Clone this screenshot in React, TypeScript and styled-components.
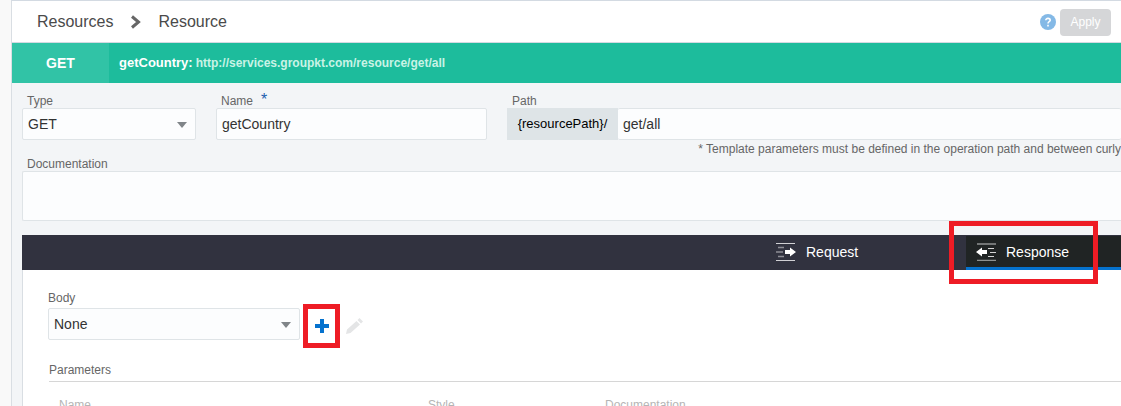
import React from "react";
import styled, { createGlobalStyle } from "styled-components";

const GlobalStyle = createGlobalStyle`
  *, *::before, *::after { box-sizing: border-box; }
  body {
    margin: 0;
    background: #f9f9f9;
    color: #333;
    font: 12px/16px "Liberation Sans", Arial, sans-serif;
  }
`;

const Page = styled.main`
  min-height: 100vh;
  margin-left: 11px;
  border-left: 1px solid #d9dee3;
  border-top: 1px solid #d3dae2;
  background: #f3f5f7;
  overflow-x: clip;
`;

const Header = styled.header`
  display: flex;
  align-items: center;
  height: 42px;
  padding: 1px 10px 0 25px;
  border-bottom: 1px solid #d3dae2;
  background: #fff;
`;

const Breadcrumb = styled.nav`
  display: flex;
  align-items: center;
  gap: 17px;
  flex: 1;
  font-size: 16px;
  line-height: 20px;
`;

const Crumb = styled.a`
  color: #4a4a4a;
  text-decoration: none;
`;

const IconButton = styled.button`
  display: flex;
  padding: 0;
  border: 0;
  background: none;
`;

const ApplyButton = styled.button`
  width: 51px;
  height: 27px;
  margin-left: 4px;
  padding: 0;
  border: 0;
  border-radius: 4px;
  background: #d5d6d8;
  color: #fff;
  font: 12px/16px "Liberation Sans", Arial, sans-serif;
`;

const MethodBar = styled.div`
  display: flex;
  align-items: center;
  height: 40px;
  background: #1dbc9c;
  color: #fff;
  font-size: 13px;
  font-weight: bold;
`;

const Method = styled.span`
  display: flex;
  align-items: center;
  justify-content: center;
  width: 97px;
  height: 40px;
  margin-right: 10px;
  background: #31c3a6;
  font-size: 14px;
`;

const Url = styled.span`
  margin-left: 3px;
  color: #c9f3e6;
  font-size: 12px;
`;

const Form = styled.form`
  padding: 11px 0 0 10px;
`;

const FieldRow = styled.div`
  display: grid;
  grid-template-columns: 174px 271px 1fr;
  gap: 20px;
`;

const Field = styled.div`
  min-width: 0;
`;

const Label = styled.label<{ $spaced?: boolean }>`
  display: block;
  padding: ${(p) => (p.$spaced ? "0 0 3px" : "0 0 0 5px")};
  color: #666;
  font-size: 12px;
  line-height: 14px;
`;

const Required = styled.span`
  margin-left: 8px;
  color: #1f5fae;
  font-size: 16px;
  line-height: 0;
`;

const SelectWrap = styled.div<{ $width: number }>`
  position: relative;
  width: ${(p) => p.$width}px;

  svg {
    position: absolute;
    top: 14px;
    right: 9px;
    pointer-events: none;
  }
`;

const Select = styled.select`
  display: block;
  appearance: none;
  width: 100%;
  height: 32px;
  padding: 0 24px 0 5px;
  border: 1px solid #dfe4e7;
  border-radius: 2px;
  background: #fcfdfe;
  color: #333;
  font: 14px/20px "Liberation Sans", Arial, sans-serif;
`;

const TextInput = styled.input`
  display: block;
  flex: 1;
  width: 100%;
  min-width: 0;
  height: 32px;
  padding: 0 5px;
  border: 1px solid #dfe4e7;
  border-radius: 2px;
  background: #fcfdfe;
  color: #333;
  font: 14px/20px "Liberation Sans", Arial, sans-serif;
`;

const PathGroup = styled.div`
  display: flex;

  ${TextInput} {
    border-left: 0;
    border-right: 0;
  }
`;

const PathPrefix = styled.span`
  display: flex;
  align-items: center;
  justify-content: center;
  width: 111px;
  height: 32px;
  background: #dee4e7;
  color: #000;
  font-size: 13px;
`;

const Hint = styled.p`
  margin: 0;
  padding-top: 1px;
  color: #666;
  text-align: right;
  white-space: nowrap;
`;

const TextArea = styled.textarea`
  display: block;
  width: 100%;
  height: 50px;
  border: 1px solid #dfe4e7;
  border-right: 0;
  border-radius: 2px 0 0 2px;
  background: #fcfdfe;
  resize: none;
`;

const TabBar = styled.div`
  display: flex;
  justify-content: flex-end;
  height: 35px;
  margin: 14px -45px 0 10px;
  background: #31323f;
`;

const Tab = styled.button<{ $active?: boolean }>`
  position: relative;
  display: flex;
  align-items: center;
  gap: 10px;
  width: 200px;
  padding: 0 10px;
  border: 0;
  border-top: 1px solid #31323f;
  border-bottom: 3px solid ${(p) => (p.$active ? "#0572ce" : "#31323f")};
  background: ${(p) => (p.$active ? "#202424" : "#31323f")};
  color: #fff;
  font: 14px/20px "Liberation Sans", Arial, sans-serif;
`;

const Highlight = styled.span<{ $x: number; $y: number; $w: number; $h: number }>`
  position: absolute;
  left: ${(p) => p.$x}px;
  top: ${(p) => p.$y}px;
  width: ${(p) => p.$w}px;
  height: ${(p) => p.$h}px;
  border: 5px solid #ee1c25;
  pointer-events: none;
`;

const Panel = styled.section`
  margin-left: 10px;
  padding: 21px 0 0 25px;
  border-left: 1px solid #d9dee3;
  background: #fff;
`;

const BodyRow = styled.div`
  display: flex;
  align-items: center;

  button {
    margin-top: 4px;
  }
`;

const AddButton = styled(IconButton)`
  position: relative;
  margin: 0 16px 0 15px;
`;

const SectionTitle = styled.h2`
  margin: 22px 0 0 1px;
  padding-bottom: 3px;
  border-bottom: 1px solid #d6d6d6;
  color: #666;
  font-size: 12px;
  font-weight: normal;
  line-height: 16px;
`;

const Table = styled.table`
  width: 100%;
  margin-top: 15px;
  border-collapse: collapse;
  table-layout: fixed;
`;

const Column = styled.th<{ $width?: number }>`
  width: ${(p) => (p.$width ? `${p.$width}px` : "auto")};
  padding: 0 0 0 11px;
  color: #b5b5b5;
  font-weight: normal;
  text-align: left;
`;

const Arrow = () => (
  <svg width="10" height="6" viewBox="0 0 10 6" aria-hidden="true">
    <path d="M0 0h10L5 6z" fill="#808589" />
  </svg>
);

const RequestIcon = () => (
  <svg width="20" height="18" viewBox="0 0 20 18" aria-hidden="true">
    <path d="M0 .5h19M0 17.5h19" stroke="#d0d0d4" />
    <path d="M2 4.500h6M0 9h7M2 13.500h6" stroke="#8e8e96" strokeWidth="1.500" />
    <path d="M9 7h5V4.500l6 4.500-6 4.500V11H9z" fill="#fff" />
  </svg>
);

const ResponseIcon = () => (
  <svg width="20" height="18" viewBox="0 0 20 18" aria-hidden="true">
    <path d="M1 1h19M1 17.500h19" stroke="#8e9191" strokeWidth="1.500" />
    <path d="M12 5.500h6M14 9.500h6M12 13.500h6" stroke="#d5d5d5" />
    <path d="M11 7H6V4.500L0 9l6 4.500V11h5z" fill="#fff" />
  </svg>
);

export default function App() {
  return (
    <>
      <GlobalStyle />
      <Page>
        <Header>
          <Breadcrumb aria-label="Breadcrumb">
            <Crumb href="#resources">Resources</Crumb>
            <svg width="11" height="14" viewBox="0 0 11 14" aria-hidden="true">
              <path d="M2 1.500L8.500 7L2 12.500" fill="none" stroke="#666" strokeWidth="3" />
            </svg>
            <Crumb href="#resource">Resource</Crumb>
          </Breadcrumb>
          <IconButton type="button" aria-label="Help">
            <svg width="16" height="16" viewBox="0 0 16 16">
              <circle cx="8" cy="8" r="8" fill="#84b9e6" />
              <path d="M5.800 6.200C5.800 3.700 10.200 3.800 10.200 6.200C10.200 7.700 8 7.600 8 9.400M8 10.800v1.700" fill="none" stroke="#fff" strokeWidth="1.600" />
            </svg>
          </IconButton>
          <ApplyButton type="button">Apply</ApplyButton>
        </Header>
        <MethodBar>
          <Method>GET</Method>
          getCountry:<Url>http://services.groupkt.com/resource/get/all</Url>
        </MethodBar>
        <Form>
          <FieldRow>
            <Field>
              <Label htmlFor="type">Type</Label>
              <SelectWrap $width={174}>
                <Select id="type" defaultValue="GET">
                  <option>GET</option>
                </Select>
                <Arrow />
              </SelectWrap>
            </Field>
            <Field>
              <Label htmlFor="name">
                Name<Required>*</Required>
              </Label>
              <TextInput id="name" defaultValue="getCountry" />
            </Field>
            <Field>
              <Label htmlFor="path">Path</Label>
              <PathGroup>
                <PathPrefix>{"{resourcePath}/"}</PathPrefix>
                <TextInput id="path" defaultValue="get/all" />
              </PathGroup>
              <Hint>* Template parameters must be defined in the operation path and between curly</Hint>
            </Field>
          </FieldRow>
          <Label htmlFor="documentation">Documentation</Label>
          <TextArea id="documentation" />
        </Form>
        <TabBar role="tablist">
          <Tab type="button" role="tab" aria-selected="false">
            <RequestIcon />
            Request
          </Tab>
          <Tab type="button" role="tab" aria-selected="true" $active>
            <ResponseIcon />
            Response
            <Highlight $x={-17} $y={-15} $w={149} $h={63} />
          </Tab>
        </TabBar>
        <Panel>
          <Label htmlFor="body" $spaced>Body</Label>
          <BodyRow>
            <SelectWrap $width={252}>
              <Select id="body" defaultValue="None">
                <option>None</option>
              </Select>
              <Arrow />
            </SelectWrap>
            <AddButton type="button" aria-label="Add body">
              <svg width="14" height="14" viewBox="0 0 14 14">
                <path d="M5 0h4v5h5v4H9v5H5V9H0V5h5z" fill="#0572ce" />
              </svg>
              <Highlight $x={-12} $y={-15} $w={37} $h={44} />
            </AddButton>
            <IconButton type="button" aria-label="Edit body" disabled>
              <svg width="18" height="16" viewBox="0 0 18 16">
                <path d="M1 16l1-4.500L11.500 3l3.500 3.500L5.500 15zM12.500 2L14.500 0L18 3.500l-2 2z" fill="#e4e5e6" />
              </svg>
            </IconButton>
          </BodyRow>
          <SectionTitle>Parameters</SectionTitle>
          <Table>
            <thead>
              <tr>
                <Column scope="col" $width={369}>Name</Column>
                <Column scope="col" $width={177}>Style</Column>
                <Column scope="col">Documentation</Column>
              </tr>
            </thead>
          </Table>
        </Panel>
      </Page>
    </>
  );
}
